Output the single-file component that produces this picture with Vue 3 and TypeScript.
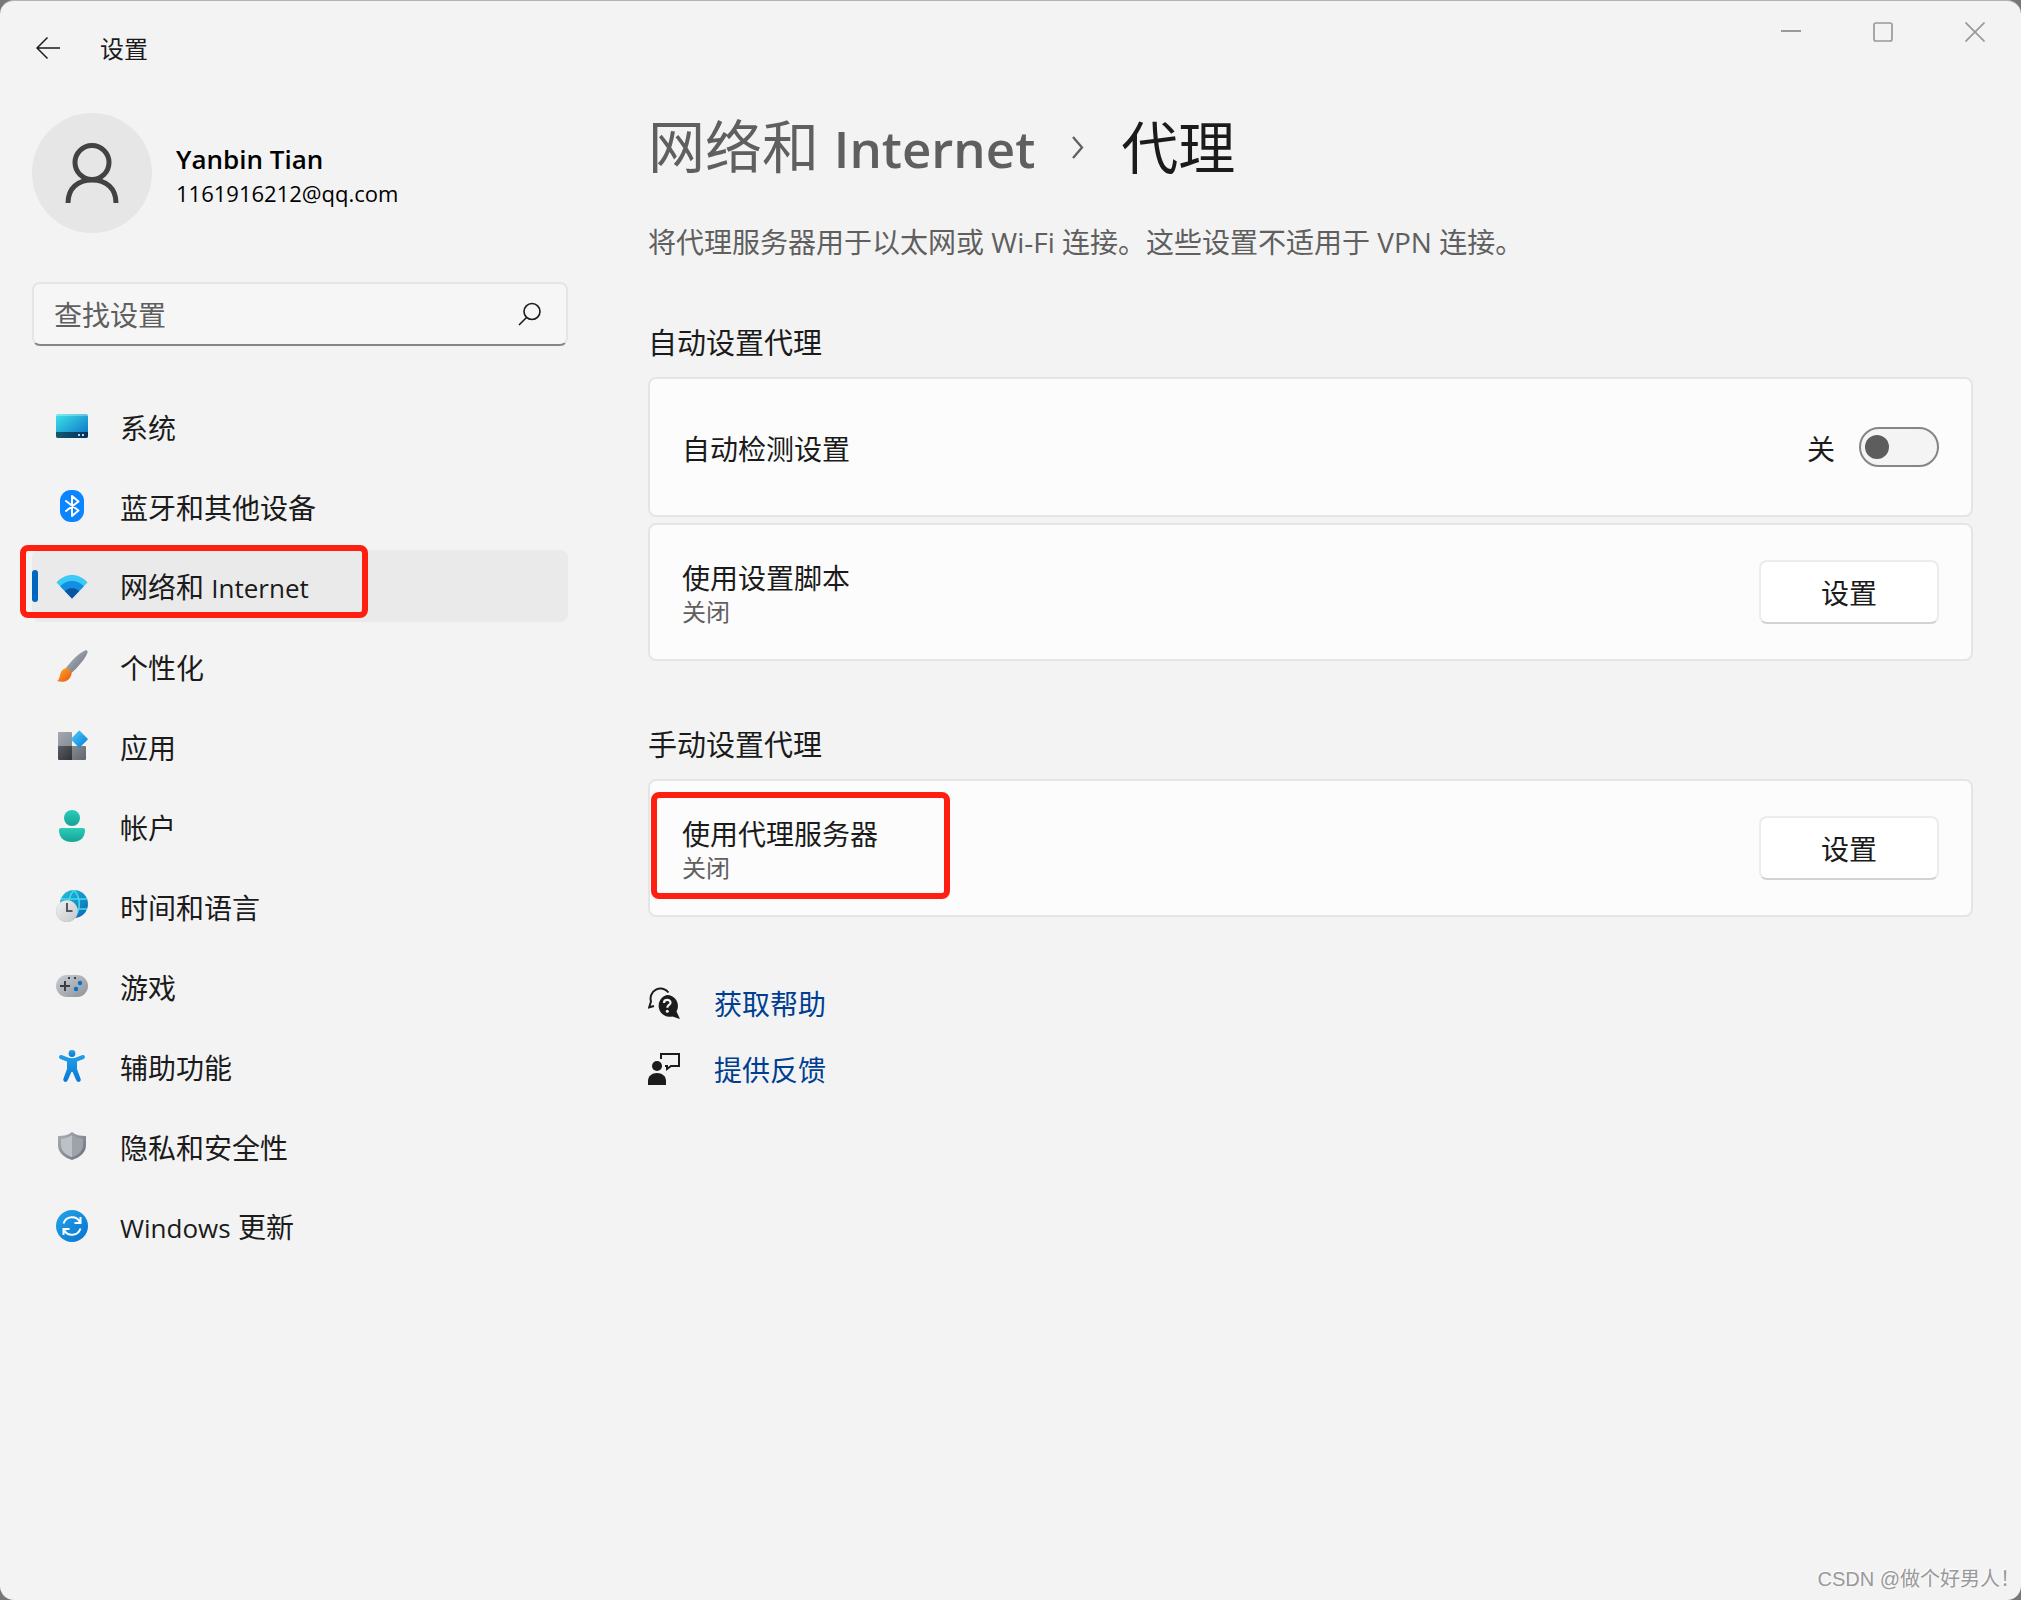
<script setup lang="ts">
import { ref } from 'vue'

type IconName =
  | 'system' | 'bluetooth' | 'network' | 'brush' | 'apps' | 'account'
  | 'time' | 'gaming' | 'accessibility' | 'privacy' | 'update'

interface NavItem {
  icon: IconName
  label: string
  current?: boolean
}

const navItems: NavItem[] = [
  { icon: 'system', label: '系统' },
  { icon: 'bluetooth', label: '蓝牙和其他设备' },
  { icon: 'network', label: '网络和 Internet', current: true },
  { icon: 'brush', label: '个性化' },
  { icon: 'apps', label: '应用' },
  { icon: 'account', label: '帐户' },
  { icon: 'time', label: '时间和语言' },
  { icon: 'gaming', label: '游戏' },
  { icon: 'accessibility', label: '辅助功能' },
  { icon: 'privacy', label: '隐私和安全性' },
  { icon: 'update', label: 'Windows 更新' },
]

// Latin words are set a little smaller than the Chinese text around them.
const runs = (label: string) =>
  label
    .split(/([A-Za-z]+)/)
    .filter(Boolean)
    .map((text) => ({ text, latin: /^[A-Za-z]/.test(text) }))

const query = ref('')
const autoDetect = ref(false)
</script>

<template>
  <div class="window">
    <header class="titlebar">
      <button class="back" type="button" aria-label="返回">
        <svg width="24" height="24" viewBox="0 0 24 24" fill="none" stroke="#1b1b1b" stroke-width="1.5">
          <path d="M24 12H1M11.5 1.5L1 12l10.500 10.500" />
        </svg>
      </button>
      <span class="app-name">设置</span>
      <div class="controls">
        <button type="button" aria-label="最小化">
          <svg width="20" height="20" viewBox="0 0 20 20" fill="none" stroke="#999" stroke-width="2"><path d="M0 9h20" /></svg>
        </button>
        <button type="button" aria-label="最大化">
          <svg width="20" height="20" viewBox="0 0 20 20" fill="none" stroke="#999" stroke-width="1.700"><rect x="1" y="1" width="18" height="18" rx="2" /></svg>
        </button>
        <button type="button" aria-label="关闭窗口">
          <svg width="20" height="20" viewBox="0 0 20 20" fill="none" stroke="#999" stroke-width="1.700"><path d="M.5.5l19 19M19.500.5l-19 19" /></svg>
        </button>
      </div>
    </header>

    <div class="body">
      <aside class="sidebar">
        <div class="profile">
          <div class="avatar">
            <svg width="56" height="60" viewBox="0 0 56 60" fill="none" stroke="#424242" stroke-width="5">
              <circle cx="28" cy="19.500" r="17" />
              <path d="M4 60C4 45 14 37 28 37S52 45 52 60" />
            </svg>
          </div>
          <div class="who">
            <div class="name">Yanbin Tian</div>
            <div class="email">1161916212@qq.com</div>
          </div>
        </div>

        <div class="search">
          <input v-model="query" type="text" placeholder="查找设置" aria-label="查找设置" />
          <svg width="24" height="24" viewBox="0 0 24 24" fill="none" stroke="#1b1b1b" stroke-width="1.600">
            <circle cx="14" cy="9.500" r="8" /><path d="M8.500 15.500L1 23" />
          </svg>
        </div>

        <nav>
          <a
            v-for="item in navItems"
            :key="item.icon"
            href="#"
            class="nav-item"
            :class="{ current: item.current }"
            :aria-current="item.current ? 'page' : undefined"
          >
            <svg v-if="item.icon === 'system'" class="icon" viewBox="0 0 32 32">
              <defs>
                <linearGradient id="sys" x1="0" y1="0" x2="1" y2="1"><stop offset="0" stop-color="#3ee5e8" /><stop offset="1" stop-color="#0a6cc4" /></linearGradient>
                <linearGradient id="sysb" x1="0" x2="1"><stop offset="0" stop-color="#125a70" /><stop offset="1" stop-color="#06305c" /></linearGradient>
              </defs>
              <rect y="4" width="32" height="24" rx="2" fill="url(#sys)" />
              <path d="M0 6a2 2 0 0 1 2-2h28a2 2 0 0 1 2 2z" fill="#fff" opacity=".3" />
              <path d="M0 22h32v4a2 2 0 0 1-2 2H2a2 2 0 0 1-2-2z" fill="url(#sysb)" />
              <path d="M22 24h2v2h-2zM26 24h2v2h-2z" fill="#b8d6ea" />
            </svg>
            <svg v-else-if="item.icon === 'bluetooth'" class="icon" viewBox="0 0 32 32">
              <rect x="4" width="24" height="32" rx="11" fill="#0a84ff" />
              <path d="M10 11l12.500 9.500L16 26V6l6.500 5.500L10 21" fill="none" stroke="#fff" stroke-width="2" stroke-linejoin="round" stroke-linecap="round" />
            </svg>
            <svg v-else-if="item.icon === 'network'" class="icon" viewBox="0 0 32 32">
              <defs><clipPath id="fan"><path d="M16 28.500L.5 12.500C9 2.500 23 2.500 31.500 12.500z" /></clipPath></defs>
              <g clip-path="url(#fan)">
                <rect width="32" height="32" fill="#3bc9f5" />
                <circle cx="16" cy="27" r="16" fill="#138ee0" />
                <circle cx="16" cy="28" r="10" fill="#0b55a0" />
              </g>
            </svg>
            <svg v-else-if="item.icon === 'brush'" class="icon" viewBox="0 0 32 32">
              <defs>
                <linearGradient id="hdl" x1="0" y1="0" x2="1" y2="1"><stop offset="0" stop-color="#b5bcc3" /><stop offset="1" stop-color="#646c74" /></linearGradient>
                <linearGradient id="tip" x1="0" y1="0" x2="1" y2="1"><stop offset="0" stop-color="#ffb02e" /><stop offset="1" stop-color="#e8500c" /></linearGradient>
              </defs>
              <path d="M9.500 18.500C16 10 23 3 29 .5c2-.6 3 .5 2.400 2.500C29 9 22 17 15 23.500z" fill="url(#hdl)" />
              <path d="M5 22c2-4 6-5 9-2 3 3 1 7-1 9-3 3-8 3.500-12 2 3-2 2.500-6 4-9z" fill="url(#tip)" />
            </svg>
            <svg v-else-if="item.icon === 'apps'" class="icon" viewBox="0 0 32 32">
              <defs>
                <linearGradient id="a1" x1="0" y1="0" x2="1" y2="1"><stop offset="0" stop-color="#a3a9b1" /><stop offset="1" stop-color="#868d95" /></linearGradient>
                <linearGradient id="a2" x1="0" y1="0" x2="1" y2="1"><stop offset="0" stop-color="#5a5f64" /><stop offset="1" stop-color="#303336" /></linearGradient>
                <linearGradient id="a3" x1="0" y1="0" x2="1" y2="1"><stop offset="0" stop-color="#868c94" /><stop offset="1" stop-color="#61666c" /></linearGradient>
                <linearGradient id="a4" x1="0" y1="0" x2="1" y2="1"><stop offset="0" stop-color="#4fd0fa" /><stop offset="1" stop-color="#0b78d8" /></linearGradient>
              </defs>
              <path d="M2 3a1 1 0 0 1 1-1h12a1 1 0 0 1 1 1v13H2z" fill="url(#a1)" />
              <path d="M2 16h14v14H3a1 1 0 0 1-1-1z" fill="url(#a2)" />
              <path d="M16 16h13a1 1 0 0 1 1 1v12a1 1 0 0 1-1 1H16z" fill="url(#a3)" />
              <path d="M22.600.9q.7-.7 1.400 0l7.500 7.500q.7.700 0 1.400L24 17.300q-.7.700-1.400 0l-7.300-7.500q-.7-.7 0-1.400z" fill="url(#a4)" />
            </svg>
            <svg v-else-if="item.icon === 'account'" class="icon" viewBox="0 0 32 32">
              <defs><linearGradient id="acc" x1="0" y1="0" x2="0" y2="1"><stop offset="0" stop-color="#2ccdb8" /><stop offset="1" stop-color="#15a294" /></linearGradient></defs>
              <circle cx="16" cy="8" r="8" fill="url(#acc)" />
              <path d="M5 18h22a2 2 0 0 1 2 2c0 8-5 12-13 12S3 28 3 20a2 2 0 0 1 2-2z" fill="url(#acc)" />
            </svg>
            <svg v-else-if="item.icon === 'time'" class="icon" viewBox="0 0 32 32">
              <defs>
                <linearGradient id="glb" x1="0" y1="0" x2="1" y2="1"><stop offset="0" stop-color="#26c4d8" /><stop offset="1" stop-color="#0a63b8" /></linearGradient>
                <linearGradient id="clk" x1="0" y1="0" x2="1" y2="1"><stop offset="0" stop-color="#f2f3f4" /><stop offset="1" stop-color="#c3c5c8" /></linearGradient>
              </defs>
              <circle cx="18" cy="14" r="14" fill="url(#glb)" />
              <path d="M5 9h26M5 19h26M18 0c-7 8-7 20 0 28M18 0c7 8 7 20 0 28" fill="none" stroke="#45dcec" stroke-width="1.500" />
              <circle cx="11" cy="21.300" r="11" fill="#9a9da1" opacity=".5" />
              <circle cx="11" cy="21" r="10.700" fill="url(#clk)" />
              <path d="M11 13v8h5.500" fill="none" stroke="#55585c" stroke-width="2" />
            </svg>
            <svg v-else-if="item.icon === 'gaming'" class="icon" viewBox="0 0 32 32">
              <defs><linearGradient id="pad" x1="0" y1="0" x2="1" y2="1"><stop offset="0" stop-color="#c9ced3" /><stop offset="1" stop-color="#8c939a" /></linearGradient></defs>
              <rect y="5" width="32" height="22" rx="11" fill="url(#pad)" />
              <path d="M9 11v10M4 16h10" stroke="#3b3e42" stroke-width="2" />
              <path d="M12 7h2v2h-2zM18 7h2v2h-2z" fill="#3b3e42" />
              <circle cx="24" cy="13" r="2.200" fill="#0c70c8" /><circle cx="20" cy="19" r="2.200" fill="#0c70c8" />
            </svg>
            <svg v-else-if="item.icon === 'accessibility'" class="icon" viewBox="0 0 32 32">
              <defs><linearGradient id="man" x1="0" y1="0" x2="0" y2="1"><stop offset="0" stop-color="#229fe6" /><stop offset="1" stop-color="#0878d4" /></linearGradient></defs>
              <g fill="url(#man)">
                <circle cx="16" cy="3.500" r="3.400" />
                <path d="M5.600 5.100L12 7.500q4 1.300 8 0l6.400-2.400c2.600-.8 3.600 2.800 1.200 3.800L21 11.600V19l3.600 9.800c.9 2.900-3 4.300-4.200 1.800L16.600 22h-1.200l-3.800 8.600c-1.200 2.500-5 1.100-4.200-1.800L11 19v-7.400L4.400 8.900C2 7.900 3 4.300 5.600 5.100z" />
              </g>
            </svg>
            <svg v-else-if="item.icon === 'privacy'" class="icon" viewBox="0 0 32 32">
              <defs><linearGradient id="shd" x1="0" y1="0" x2="1" y2="1"><stop offset="0" stop-color="#a9afb5" /><stop offset="1" stop-color="#6b7178" /></linearGradient></defs>
              <path d="M16 2c4 3 8 4 14 4v9c0 7-5 12-14 15C7 27 2 22 2 15V6c6 0 10-1 14-4z" fill="url(#shd)" />
              <path d="M16 5C13 7 9 8.500 5 8.700V15c0 5.500 4 9.500 11 12.300z" fill="#bcc1c7" />
              <path d="M16 5c3 2 7 3.500 11 3.700V15c0 5.500-4 9.500-11 12.300z" fill="#9da3a9" />
            </svg>
            <svg v-else class="icon" viewBox="0 0 32 32">
              <defs><linearGradient id="upd" x1="0" y1="0" x2="1" y2="1"><stop offset="0" stop-color="#25a5e8" /><stop offset="1" stop-color="#0672d0" /></linearGradient></defs>
              <circle cx="16" cy="16" r="16" fill="url(#upd)" />
              <path d="M7.500 13.500C10 6 20 5 24 12M24.500 7v6H18.500M24.500 18.500C22 26 12 27 8 20M7.500 25v-6h6" fill="none" stroke="#fff" stroke-width="2" />
            </svg>
            <span class="text"><span v-for="run in runs(item.label)" :key="run.text" :class="{ latin: run.latin }">{{ run.text }}</span></span>
            <i v-if="item.current" class="mark mark-nav"></i>
          </a>
        </nav>
      </aside>

      <main class="main">
        <h1 class="crumbs">
          <a href="#">网络和 <span class="title-latin">Internet</span></a>
          <svg width="14" height="24" viewBox="0 0 14 24" fill="none" stroke="#5f5f5f" stroke-width="2.300"><path d="M2 2l9 10.500L2 23" /></svg>
          <span>代理</span>
        </h1>
        <p class="desc">将代理服务器用于以太网或 Wi-Fi 连接。这些设置不适用于 VPN 连接。</p>

        <section>
          <h2>自动设置代理</h2>
          <div class="card card-toggle">
            <label for="auto-detect" class="label">自动检测设置</label>
            <span class="state">{{ autoDetect ? '开' : '关' }}</span>
            <input id="auto-detect" v-model="autoDetect" type="checkbox" role="switch" class="switch" />
          </div>
          <div class="card">
            <div class="label">
              <div id="script-label">使用设置脚本</div>
              <div class="sub">关闭</div>
            </div>
            <button type="button" class="btn" aria-describedby="script-label">设置</button>
          </div>
        </section>

        <section>
          <h2>手动设置代理</h2>
          <div class="card">
            <div class="label">
              <div id="proxy-label">使用代理服务器</div>
              <div class="sub">关闭</div>
            </div>
            <button type="button" class="btn" aria-describedby="proxy-label">设置</button>
            <i class="mark mark-card"></i>
          </div>
        </section>

        <div class="links">
          <a href="#">
            <svg class="icon" viewBox="0 0 32 32">
              <path d="M20.500 5.500A10 10 0 0 0 3 14.500L1.200 20.300 6 19" fill="none" stroke="#1b1b1b" stroke-width="2" />
              <path d="M19 8a11 11 0 0 1 9.500 16.500L32 32l-7.500-2.500A11 11 0 1 1 19 8z" fill="#1b1b1b" />
              <path d="M16 16c0-4 6.500-4 6.500-.3 0 2.300-3.200 2.300-3.200 5" fill="none" stroke="#f3f3f3" stroke-width="2.200" />
              <circle cx="19.300" cy="24.300" r="1.500" fill="#f3f3f3" />
            </svg>
            <span class="text">获取帮助</span>
          </a>
          <a href="#">
            <svg class="icon" viewBox="0 0 32 32">
              <circle cx="9" cy="13" r="5" fill="#1b1b1b" />
              <path d="M0 32v-4c0-5 4-8 9-8s9 3 9 8v4z" fill="#1b1b1b" />
              <path d="M13 6V1h18v12h-8l-4 3v-3h-2" fill="none" stroke="#1b1b1b" stroke-width="2" />
            </svg>
            <span class="text">提供反馈</span>
          </a>
        </div>
      </main>
    </div>

    <div class="watermark">CSDN @做个好男人！</div>
  </div>
</template>

<style>
body {
  margin: 0;
  background: #777;
}
</style>

<style scoped>
.window {
  position: relative;
  box-sizing: border-box;
  min-height: 100vh;
  border-top: 1px solid #b4b4b4;
  border-radius: 14px;
  background: #f3f3f3;
  color: #1b1b1b;
  font-family: "Open Sans", "Noto Sans CJK SC", sans-serif;
  font-size: 28px;
  line-height: 36px;
}
a {
  color: inherit;
  text-decoration: none;
}
button {
  font: inherit;
  color: inherit;
}
.text {
  padding-top: 3px;
}
.titlebar {
  display: flex;
  align-items: flex-start;
  height: 112px;
}
.back,
.controls button {
  display: flex;
  justify-content: center;
  align-items: center;
  padding: 0;
  border: 0;
  background: none;
}
.back {
  width: 96px;
  height: 94px;
}
.app-name {
  padding-left: 4px;
  font-size: 24px;
  line-height: 96px;
}
.controls {
  display: flex;
  margin-left: auto;
}
.controls button {
  width: 92px;
  height: 62px;
}
.body {
  display: flex;
  gap: 80px;
  padding: 0 48px 0 32px;
}
.sidebar {
  flex: 0 0 536px;
}
.profile {
  display: flex;
  align-items: center;
  gap: 24px;
  margin-bottom: 49px;
  color: #000;
}
.avatar {
  display: flex;
  justify-content: center;
  align-items: center;
  width: 120px;
  height: 120px;
  border-radius: 50%;
  background: #e6e6e6;
}
.who {
  padding-top: 4px;
}
.name {
  font-size: 26px;
  font-weight: 600;
}
.email {
  font-size: 22px;
  line-height: 32px;
}
.search {
  display: flex;
  align-items: center;
  box-sizing: border-box;
  height: 64px;
  margin-bottom: 44px;
  padding: 0 24px 0 20px;
  border: 2px solid #e5e5e5;
  border-bottom-color: #868686;
  border-radius: 8px;
  background: #f6f6f6;
}
.search input {
  flex: 1;
  min-width: 0;
  padding: 2px 0 0;
  border: 0;
  outline: 0;
  background: none;
  color: inherit;
  font: inherit;
}
.search input::placeholder {
  color: #5f5f5f;
  opacity: 1;
}
nav {
  display: flex;
  flex-direction: column;
  gap: 8px;
}
.nav-item {
  position: relative;
  display: flex;
  align-items: center;
  gap: 32px;
  height: 72px;
  padding-left: 24px;
  border-radius: 8px;
}
.nav-item .text {
  white-space: pre;
}
.latin {
  font-size: 26px;
}
.nav-item.current {
  background: #eaeaea;
}
.nav-item.current::before {
  content: "";
  position: absolute;
  left: 0;
  top: 20px;
  width: 6px;
  height: 32px;
  border-radius: 3px;
  background: #0067c0;
}
.icon {
  flex: none;
  width: 32px;
  height: 32px;
}
.mark {
  position: absolute;
  box-sizing: border-box;
  border: 6px solid #ff1f10;
  border-radius: 8px;
  pointer-events: none;
}
.mark-nav {
  left: -12px;
  top: -5px;
  width: 348px;
  height: 73px;
}
.mark-card {
  left: 1px;
  top: 11px;
  width: 299px;
  height: 107px;
}
.main {
  flex: 1;
  min-width: 0;
}
.crumbs {
  display: flex;
  align-items: center;
  gap: 36px;
  margin: 0;
  font-size: 57px;
  font-weight: 400;
  line-height: 66px;
}
.crumbs a {
  color: #5f5f5f;
}
.title-latin {
  font-size: 51px;
  font-weight: 600;
}
.desc {
  margin: 43px 0 65px;
  color: #5f5f5f;
}
section {
  margin-bottom: 66px;
}
h2 {
  margin: 0 0 16px;
  font-size: 29px;
  font-weight: 400;
  line-height: 36px;
}
.card {
  position: relative;
  display: flex;
  align-items: center;
  box-sizing: border-box;
  min-height: 138px;
  padding: 0 32px;
  border: 2px solid #e5e5e5;
  border-radius: 8px;
  background: #fcfcfc;
}
.card-toggle {
  min-height: 140px;
  margin-bottom: 6px;
}
.label {
  flex: 1;
  padding-top: 3px;
}
.sub {
  color: #5f5f5f;
  font-size: 24px;
  line-height: 32px;
}
.state {
  margin-right: 24px;
  padding-top: 3px;
}
.switch {
  appearance: none;
  display: flex;
  align-items: center;
  box-sizing: border-box;
  width: 80px;
  height: 40px;
  margin: 0;
  padding: 0 4px;
  border: 2px solid #868686;
  border-radius: 20px;
  background: #f4f4f4;
}
.switch::before {
  content: "";
  width: 24px;
  height: 24px;
  border-radius: 50%;
  background: #5d5d5d;
}
.switch:checked {
  justify-content: flex-end;
  border-color: #0067c0;
  background: #0067c0;
}
.switch:checked::before {
  background: #fff;
}
.btn {
  width: 180px;
  height: 64px;
  padding: 2px 0 0;
  border: 2px solid #ececec;
  border-bottom-color: #d2d2d2;
  border-radius: 8px;
  background: #fff;
}
.links {
  display: flex;
  flex-direction: column;
  align-items: flex-start;
  gap: 27px;
}
.links a {
  display: flex;
  align-items: center;
  gap: 34px;
  color: #003e92;
}
.watermark {
  position: absolute;
  right: 1px;
  bottom: 7px;
  color: #999;
  font-family: "Liberation Sans", "Noto Sans CJK SC", sans-serif;
  font-size: 20px;
  line-height: 28px;
  text-shadow: -1px -1px 0 #fff;
}
</style>
